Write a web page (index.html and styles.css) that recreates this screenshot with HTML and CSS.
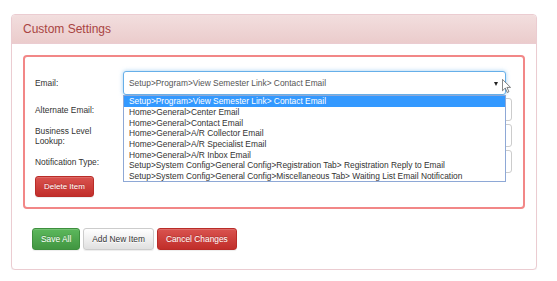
FILE: index.html
```html
<!DOCTYPE html>
<html>
<head>
<meta charset="utf-8">
<link rel="stylesheet" href="styles.css">
</head>
<body>
<div class="page">
  <div class="panel">
    <div class="panel-heading">Custom Settings</div>
    <div class="panel-body">
      <div class="error-box">
        <div class="form-row">
          <label class="label">Email:</label>
          <div class="select-wrap">
            <div class="select">
              <span class="select-text">Setup&gt;Program&gt;View Semester Link&gt; Contact Email</span>
              <span class="caret"></span>
            </div>
            <ul class="options">
              <li class="option selected">Setup&gt;Program&gt;View Semester Link&gt; Contact Email</li>
              <li class="option">Home&gt;General&gt;Center Email</li>
              <li class="option">Home&gt;General&gt;Contact Email</li>
              <li class="option">Home&gt;General&gt;A/R Collector Email</li>
              <li class="option">Home&gt;General&gt;A/R Specialist Email</li>
              <li class="option">Home&gt;General&gt;A/R Inbox Email</li>
              <li class="option">Setup&gt;System Config&gt;General Config&gt;Registration Tab&gt; Registration Reply to Email</li>
              <li class="option">Setup&gt;System Config&gt;General Config&gt;Miscellaneous Tab&gt; Waiting List Email Notification</li>
            </ul>
            <svg class="cursor" width="9" height="14" viewBox="0 0 12 19">
              <path d="M0.5 0.5 L0.5 16 L4.3 12.3 L7 18.3 L9.3 17.3 L6.6 11.4 L11.5 11.4 Z" fill="#fff" stroke="#555" stroke-width="1"/>
            </svg>
          </div>
        </div>
        <div class="form-row">
          <label class="label">Alternate Email:</label>
          <div class="input"></div>
        </div>
        <div class="form-row">
          <label class="label">Business Level<br>Lookup:</label>
          <div class="input"></div>
        </div>
        <div class="form-row">
          <label class="label">Notification Type:</label>
          <div class="input"></div>
        </div>
        <div class="delete-row">
          <button class="btn btn-danger btn-delete">Delete Item</button>
        </div>
      </div>
      <div class="actions">
        <button class="btn btn-success">Save All</button>
        <button class="btn btn-default">Add New Item</button>
        <button class="btn btn-danger">Cancel Changes</button>
      </div>
    </div>
  </div>
</div>
</body>
</html>
```

FILE: styles.css
```css
* { box-sizing: border-box; }
body {
  margin: 0;
  background: #fff;
  font-family: "Liberation Sans", Arial, sans-serif;
  color: #333;
}
.page {
  padding: 14px 20px 0 11px;
}
.panel {
  width: 526px;
  border: 1px solid #ebccd1;
  border-radius: 4px;
  box-shadow: 0 1px 1px rgba(0,0,0,0.05);
  background: #fff;
}
.panel-heading {
  height: 29px;
  line-height: 28px;
  padding: 0 11px;
  font-size: 12px;
  color: #a94442;
  background: linear-gradient(#f2dede, #ebcccc);
  border-bottom: 1px solid #ebccd1;
  border-radius: 3px 3px 0 0;
}
.panel-body {
  padding: 11px 11px 19px 11px;
}
.error-box {
  border: 2px solid #f28787;
  border-radius: 4px;
  padding: 14px 11px 10px 10px;
}
.form-row {
  display: grid;
  grid-template-columns: 88px 1fr;
  align-items: center;
  margin-bottom: 3px;
}
.label {
  font-size: 8.4px;
  line-height: 10px;
  color: #333;
}
.select-wrap {
  position: relative;
  height: 24px;
  margin-right: 6px;
}
.select {
  height: 24px;
  border: 1px solid #66afe9;
  border-radius: 3px;
  box-shadow: 0 0 4px rgba(102,175,233,0.6);
  display: flex;
  align-items: center;
  justify-content: space-between;
  padding: 0 7px 0 5px;
  background: #fff;
}
.select-text {
  font-size: 8.4px;
  color: #555;
}
.caret {
  width: 0;
  height: 0;
  border-left: 2.5px solid transparent;
  border-right: 2.5px solid transparent;
  border-top: 4px solid #222;
  margin-top: 1px;
}
.options {
  position: absolute;
  top: 24px;
  left: 0;
  right: 0;
  margin: 0;
  padding: 0;
  list-style: none;
  background: #fff;
  border: 1px solid #8ea8d6;
  z-index: 2;
}
.option {
  height: 10.65px;
  line-height: 10.65px;
  padding-left: 5px;
  font-size: 8.4px;
  color: #333;
  white-space: nowrap;
}
.option.selected {
  background: #3399ff;
  color: #fff;
  height: 11px;
  line-height: 11px;
}
.cursor {
  position: absolute;
  left: 379px;
  top: 8px;
  z-index: 3;
}
.input {
  height: 23px;
  border: 1px solid #ccc;
  border-radius: 3px;
  background: #fff;
}
.btn {
  font-family: "Liberation Sans", Arial, sans-serif;
  font-size: 8.4px;
  height: 22px;
  padding: 0 8px;
  border-radius: 3px;
  border: 1px solid transparent;
  cursor: pointer;
  vertical-align: top;
}
.btn-delete {
  height: 21px;
  padding: 0 8px;
  font-size: 8px;
}
.btn-danger {
  color: #fff;
  background: linear-gradient(#d9534f, #c12e2a);
  border-color: #b92c28;
  text-shadow: 0 -1px 0 rgba(0,0,0,0.2);
  box-shadow: inset 0 1px 0 rgba(255,255,255,0.15), 0 1px 1px rgba(0,0,0,0.075);
}
.btn-success {
  color: #fff;
  background: linear-gradient(#5cb85c, #419641);
  border-color: #3e8f3e;
  text-shadow: 0 -1px 0 rgba(0,0,0,0.2);
  box-shadow: inset 0 1px 0 rgba(255,255,255,0.15), 0 1px 1px rgba(0,0,0,0.075);
}
.btn-default {
  color: #333;
  background: linear-gradient(#fff, #e0e0e0);
  border-color: #ccc;
  text-shadow: 0 1px 0 #fff;
  box-shadow: inset 0 1px 0 rgba(255,255,255,0.15), 0 1px 1px rgba(0,0,0,0.075);
}
.actions {
  margin-top: 19px;
  padding-left: 9px;
  display: flex;
  gap: 3px;
}
```
